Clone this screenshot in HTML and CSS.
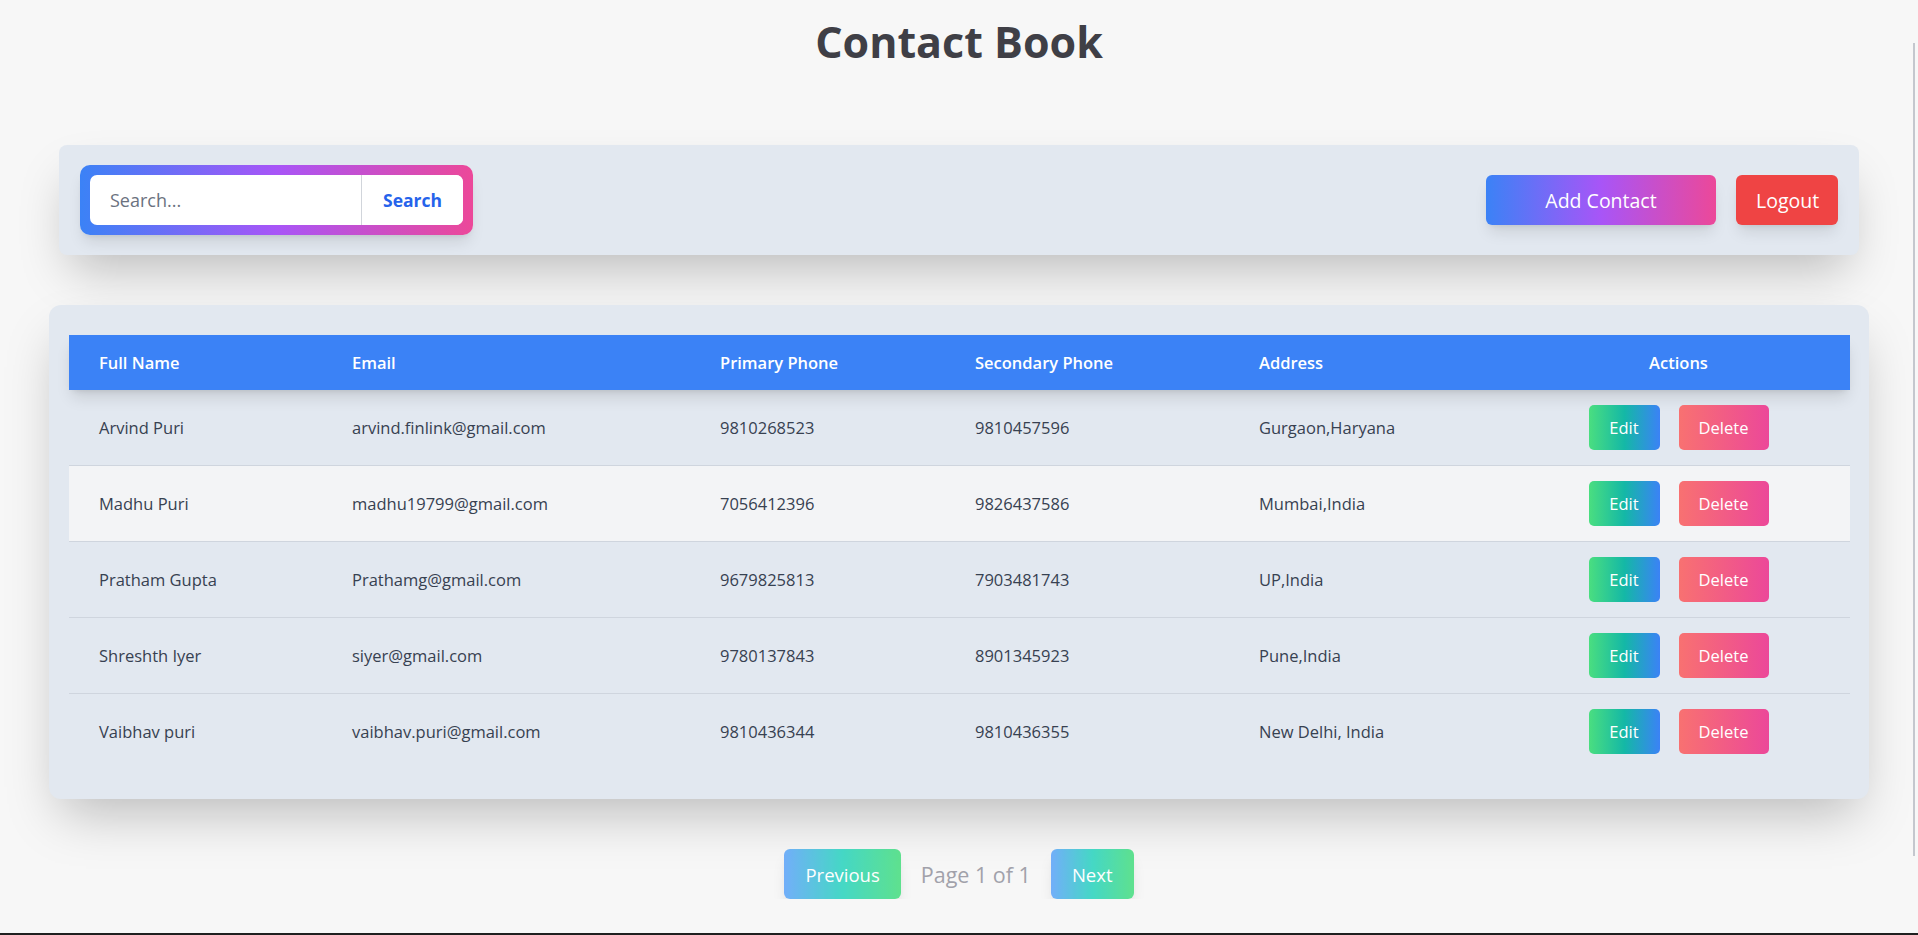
FILE: index.html
```html
<!DOCTYPE html>
<html lang="en">
<head>
<meta charset="utf-8">
<title>Contact Book</title>
<link rel="stylesheet" href="styles.css">
</head>
<body>
<div class="page">
  <h1 class="title">Contact Book</h1>

  <div class="toolbar">
    <div class="search-group">
      <div class="search-inner">
        <input class="search-input" type="text" placeholder="Search...">
        <button class="search-btn">Search</button>
      </div>
    </div>
    <div class="toolbar-actions">
      <button class="btn btn-add">Add Contact</button>
      <button class="btn btn-logout">Logout</button>
    </div>
  </div>

  <div class="table-card">
    <table class="contacts">
      <colgroup>
        <col class="c-name"><col class="c-email"><col class="c-p1"><col class="c-p2"><col class="c-addr"><col class="c-act">
      </colgroup>
      <thead>
        <tr>
          <th>Full Name</th>
          <th>Email</th>
          <th>Primary Phone</th>
          <th>Secondary Phone</th>
          <th>Address</th>
          <th class="th-center">Actions</th>
        </tr>
      </thead>
      <tbody>
        <tr>
          <td>Arvind Puri</td><td>arvind.finlink@gmail.com</td><td>9810268523</td><td>9810457596</td><td>Gurgaon,Haryana</td>
          <td><div class="row-actions"><button class="btn-sm btn-edit">Edit</button><button class="btn-sm btn-delete">Delete</button></div></td>
        </tr>
        <tr class="is-hover">
          <td>Madhu Puri</td><td>madhu19799@gmail.com</td><td>7056412396</td><td>9826437586</td><td>Mumbai,India</td>
          <td><div class="row-actions"><button class="btn-sm btn-edit">Edit</button><button class="btn-sm btn-delete">Delete</button></div></td>
        </tr>
        <tr>
          <td>Pratham Gupta</td><td>Prathamg@gmail.com</td><td>9679825813</td><td>7903481743</td><td>UP,India</td>
          <td><div class="row-actions"><button class="btn-sm btn-edit">Edit</button><button class="btn-sm btn-delete">Delete</button></div></td>
        </tr>
        <tr>
          <td>Shreshth Iyer</td><td>siyer@gmail.com</td><td>9780137843</td><td>8901345923</td><td>Pune,India</td>
          <td><div class="row-actions"><button class="btn-sm btn-edit">Edit</button><button class="btn-sm btn-delete">Delete</button></div></td>
        </tr>
        <tr>
          <td>Vaibhav puri</td><td>vaibhav.puri@gmail.com</td><td>9810436344</td><td>9810436355</td><td>New Delhi, India</td>
          <td><div class="row-actions"><button class="btn-sm btn-edit">Edit</button><button class="btn-sm btn-delete">Delete</button></div></td>
        </tr>
      </tbody>
    </table>
  </div>

  <div class="pagination">
    <button class="btn-page">Previous</button>
    <span class="page-info">Page 1 of 1</span>
    <button class="btn-page">Next</button>
  </div>
</div>
<div class="scroll-thumb"></div>
<div class="frame-bottom"></div>
</body>
</html>
```

FILE: styles.css
```css
html {
  overflow: hidden;
}

body {
  margin: 0;
  background: #f7f7f7;
  font-family: "Open Sans", "Noto Sans", sans-serif;
  color: #374151;
}

.page {
  padding-top: 14px;
}

.title {
  margin: 0 0 75px;
  text-align: center;
  font-size: 43px;
  line-height: 56px;
  font-weight: 700;
  color: #3f3f46;
}

/* toolbar */
.toolbar {
  width: 1800px;
  box-sizing: border-box;
  margin: 0 auto;
  padding: 20px 21px;
  background: #e2e8f0;
  border-radius: 8px;
  display: flex;
  align-items: center;
  justify-content: space-between;
  box-shadow: 0 25px 50px -12px rgba(0, 0, 0, 0.25);
}

.search-group {
  padding: 10px;
  border-radius: 10px;
  background: linear-gradient(90deg, #3b82f6 0%, #a855f7 50%, #ec4899 100%);
  box-shadow: 0 10px 15px -3px rgba(0, 0, 0, 0.1), 0 4px 6px -4px rgba(0, 0, 0, 0.1);
}

.search-inner {
  display: flex;
  background: #fff;
  border-radius: 7px;
  overflow: hidden;
  height: 50px;
}

.search-input {
  width: 272px;
  box-sizing: border-box;
  border: 0;
  border-right: 1px solid #d1d5db;
  padding: 0 20px;
  font-family: inherit;
  font-size: 18px;
  color: #374151;
  outline: none;
  background: transparent;
}

.search-input::placeholder {
  color: #6b7280;
}

.search-btn {
  width: 101px;
  border: 0;
  background: #fff;
  color: #2563eb;
  font-family: inherit;
  font-size: 17.5px;
  font-weight: 700;
  padding: 0;
}

.toolbar-actions {
  display: flex;
  gap: 20px;
}

.btn {
  height: 50px;
  border: 0;
  border-radius: 6px;
  color: #fff;
  font-family: inherit;
  font-size: 19.5px;
  padding: 0 20px;
  box-shadow: 0 10px 15px -3px rgba(0, 0, 0, 0.1), 0 4px 6px -4px rgba(0, 0, 0, 0.1);
}

.btn-add {
  width: 230px;
  background: linear-gradient(90deg, #3b82f6 0%, #a855f7 50%, #ec4899 100%);
}

.btn-logout {
  width: 102px;
  background: #ef4444;
}

/* table card */
.table-card {
  width: 1820px;
  box-sizing: border-box;
  margin: 50px auto 0;
  padding: 30px 20px;
  background: #e2e8f0;
  border-radius: 12px;
  box-shadow: 0 25px 50px -12px rgba(0, 0, 0, 0.25);
}

.contacts {
  width: 100%;
  border-collapse: collapse;
  table-layout: fixed;
  font-size: 16.5px;
}

.c-name { width: 253px; }
.c-email { width: 368px; }
.c-p1 { width: 255px; }
.c-p2 { width: 284px; }
.c-addr { width: 278px; }
.c-act { width: 343px; }

.contacts thead tr {
  background: #3b82f6;
  box-shadow: 0 10px 15px -3px rgba(0, 0, 0, 0.12), 0 4px 6px -4px rgba(0, 0, 0, 0.12);
}

.contacts th {
  height: 55px;
  box-sizing: border-box;
  padding: 0 30px;
  text-align: left;
  color: #fff;
  font-weight: 600;
  font-size: 16.5px;
}

.contacts .th-center {
  text-align: center;
}

.contacts td {
  padding: 15px 30px;
  height: 45px;
  color: #374151;
  border-bottom: 1px solid #cfd5de;
  white-space: nowrap;
}

.contacts tbody tr:last-child td {
  border-bottom: 0;
}

.contacts tr.is-hover td {
  background: #f3f4f6;
}

.row-actions {
  display: flex;
  justify-content: center;
  gap: 19px;
}

.btn-sm {
  height: 45px;
  border: 0;
  border-radius: 5px;
  color: #fff;
  font-family: inherit;
  font-size: 16.5px;
  padding: 0;
}

.btn-edit {
  width: 71px;
  background: linear-gradient(90deg, #4ade80 0%, #14b8a6 50%, #3b82f6 100%);
}

.btn-delete {
  width: 90px;
  background: linear-gradient(90deg, #f87171 0%, #ec4899 100%);
}

/* pagination */
.pagination {
  margin-top: 50px;
  display: flex;
  justify-content: center;
  align-items: center;
  gap: 20px;
}

.btn-page {
  height: 50px;
  border: 0;
  border-radius: 6px;
  padding: 0 21px;
  color: #fff;
  font-family: inherit;
  font-size: 18.5px;
  background: linear-gradient(90deg, #60a5fa 0%, #2dd4bf 50%, #4ade80 100%);
  opacity: 0.88;
  box-shadow: 0 10px 15px -3px rgba(0, 0, 0, 0.1), 0 4px 6px -4px rgba(0, 0, 0, 0.1);
}

.page-info {
  font-size: 21.5px;
  color: #a1a1aa;
}

/* window chrome overlays */
.scroll-thumb {
  position: fixed;
  right: 3px;
  top: 43px;
  width: 2px;
  height: 813px;
  background: #c4c7ce;
}

.frame-bottom {
  position: fixed;
  left: 0;
  right: 0;
  bottom: 0;
  height: 2px;
  background: #1f1f1f;
}
```
